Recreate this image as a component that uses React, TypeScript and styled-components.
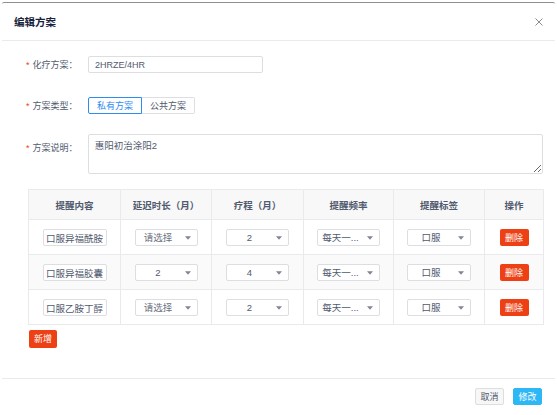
import styled, { createGlobalStyle } from 'styled-components';

const GlobalStyle = createGlobalStyle`
    html, body {
        margin: 0;
        padding: 0;
        background: #ffffff;
    }
    body {
        font-family: 'Liberation Sans', 'Noto Sans CJK SC', sans-serif;
        color: #515a6e;
    }
    * {
        box-sizing: border-box;
    }
`;

const Page = styled.div`
    width: 557px;
    height: 415px;
    padding: 2px 2px 0 2px;
    overflow: hidden;
`;

const Modal = styled.div`
    height: 411px;
    border-top: 1px solid #8f8f8f;
    border-radius: 2px 2px 0 0;
    background: #ffffff;
    display: flex;
    flex-direction: column;
`;

const Header = styled.div`
    height: 38px;
    padding: 0 12px 0 12px;
    border-bottom: 1px solid #e8eaec;
    display: flex;
    align-items: center;
    justify-content: space-between;
`;

const Title = styled.div`
    font-family: 'Noto Sans CJK SC', sans-serif;
    font-size: 10.5px;
    font-weight: 700;
    color: #17233d;
`;

const Close = styled.svg`
    width: 8px;
    height: 8px;
`;

const Body = styled.div`
    padding: 15px 12px 0 24px;
    flex: 1;
`;

const FormItem = styled.div<{ $mb: number; $top?: boolean }>`
    display: flex;
    align-items: ${(p) => (p.$top ? 'flex-start' : 'center')};
    margin-bottom: ${(p) => p.$mb}px;
`;

const Label = styled.div<{ $pt?: number }>`
    width: 62px;
    display: flex;
    align-items: center;
    font-family: 'Noto Sans CJK SC', sans-serif;
    font-size: 9px;
    line-height: 12px;
    color: #515a6e;
    padding-top: ${(p) => p.$pt ?? 0}px;
`;

const Star = styled.span`
    color: #ed4014;
    font-family: 'Liberation Sans', sans-serif;
    font-size: 9px;
    margin-right: 3px;
`;

const TextInput = styled.input`
    width: 175px;
    height: 17px;
    padding: 0 6px;
    border: 1px solid #dcdee2;
    border-radius: 2px;
    font-family: 'Liberation Sans', 'Noto Sans CJK SC', sans-serif;
    font-size: 9px;
    color: #515a6e;
    outline: none;
`;

const RadioGroup = styled.div`
    display: flex;
`;

const RadioButton = styled.div<{ $active?: boolean; $w: number; $first?: boolean }>`
    width: ${(p) => p.$w}px;
    height: 17px;
    display: flex;
    align-items: center;
    justify-content: center;
    font-family: 'Noto Sans CJK SC', sans-serif;
    font-size: 9px;
    color: ${(p) => (p.$active ? '#2d8cf0' : '#515a6e')};
    border: 1px solid ${(p) => (p.$active ? '#2d8cf0' : '#dcdee2')};
    border-left-width: ${(p) => (p.$first ? 1 : 0)}px;
    border-radius: ${(p) => (p.$first ? '2px 0 0 2px' : '0 2px 2px 0')};
`;

const TextArea = styled.textarea`
    width: 457px;
    height: 40px;
    padding: 4px 6px;
    border: 1px solid #dcdee2;
    border-radius: 2px;
    font-family: 'Liberation Sans', 'Noto Sans CJK SC', sans-serif;
    font-size: 9.5px;
    line-height: 14px;
    color: #515a6e;
    resize: vertical;
    outline: none;
`;

const Table = styled.table`
    width: 515px;
    margin-left: 2px;
    border-collapse: collapse;
    table-layout: fixed;
    border: 1px solid #e8eaec;
`;

const Th = styled.th`
    height: 30px;
    background: #f8f8f9;
    border: 1px solid #e8eaec;
    font-family: 'Noto Sans CJK SC', sans-serif;
    font-size: 9.5px;
    font-weight: 700;
    color: #515a6e;
    padding: 0;
`;

const Tr = styled.tr<{ $striped?: boolean }>`
    background: ${(p) => (p.$striped ? '#fafafa' : '#ffffff')};
`;

const Td = styled.td`
    height: 35px;
    border: 1px solid #e8eaec;
    text-align: center;
    vertical-align: middle;
    padding: 0;
`;

const CellInput = styled.input`
    width: 64px;
    height: 17px;
    padding: 0 1px;
    border: 1px solid #dcdee2;
    border-radius: 2px;
    font-family: 'Noto Sans CJK SC', sans-serif;
    font-size: 9.5px;
    text-align: center;
    color: #515a6e;
    background: #ffffff;
    outline: none;
    vertical-align: middle;
`;

const Select = styled.div<{ $w: number }>`
    display: inline-flex;
    align-items: center;
    width: ${(p) => p.$w}px;
    height: 17px;
    border: 1px solid #dcdee2;
    border-radius: 2px;
    background: #ffffff;
    vertical-align: middle;
`;

const SelectText = styled.span<{ $placeholder?: boolean }>`
    flex: 1;
    text-align: center;
    font-family: 'Liberation Sans', 'Noto Sans CJK SC', sans-serif;
    font-size: 9.5px;
    line-height: 15px;
    color: ${(p) => (p.$placeholder ? '#6b7080' : '#515a6e')};
    white-space: nowrap;
    overflow: hidden;
`;

const Caret = styled.svg`
    width: 6px;
    height: 4px;
    margin: 0 6px 0 4px;
    flex-shrink: 0;
`;

const DangerButton = styled.button<{ $w: number; $h: number }>`
    width: ${(p) => p.$w}px;
    height: ${(p) => p.$h}px;
    padding: 0;
    border: none;
    border-radius: 2px;
    background: #ed4014;
    color: #ffffff;
    font-family: 'Noto Sans CJK SC', sans-serif;
    font-size: 9px;
    vertical-align: middle;
`;

const AddRow = styled.div`
    padding: 4px 0 0 3px;
`;

const Footer = styled.div`
    border-top: 1px solid #e8eaec;
    padding: 9px 13px 8px 0;
    display: flex;
    justify-content: flex-end;
    gap: 9px;
`;

const FooterButton = styled.button<{ $primary?: boolean }>`
    width: 29px;
    height: 17px;
    padding: 0;
    border-radius: 2px;
    border: 1px solid ${(p) => (p.$primary ? '#2db7f5' : '#dcdee2')};
    background: ${(p) => (p.$primary ? '#2db7f5' : '#f7f7f7')};
    color: ${(p) => (p.$primary ? '#ffffff' : '#515a6e')};
    font-family: 'Noto Sans CJK SC', sans-serif;
    font-size: 9px;
`;

type Row = {
    name: string;
    delay: string;
    course: string;
    freq: string;
    tag: string;
};

const rows: Row[] = [
    { name: '口服异福酰胺', delay: '', course: '2', freq: '每天一...', tag: '口服' },
    { name: '口服异福胶囊', delay: '2', course: '4', freq: '每天一...', tag: '口服' },
    { name: '口服乙胺丁醇', delay: '', course: '2', freq: '每天一...', tag: '口服' },
];

const SelectBox = ({ value, width = 63 }: { value: string; width?: number }) => (
    <Select $w={width}>
        <SelectText $placeholder={!value}>{value || '请选择'}</SelectText>
        <Caret viewBox="0 0 6 4">
            <polygon points="0,0.3 6,0.3 3,3.7" fill="#808695" />
        </Caret>
    </Select>
);

const App = () => {
    return (
        <Page>
            <GlobalStyle />
            <Modal>
                <Header>
                    <Title>编辑方案</Title>
                    <Close viewBox="0 0 8 8">
                        <path d="M0.5 0.5 L7.5 7.5 M7.5 0.5 L0.5 7.5" stroke="#8a8a8a" strokeWidth="1" />
                    </Close>
                </Header>
                <Body>
                    <FormItem $mb={24}>
                        <Label>
                            <Star>*</Star>化疗方案：
                        </Label>
                        <TextInput defaultValue="2HRZE/4HR" readOnly />
                    </FormItem>
                    <FormItem $mb={20}>
                        <Label>
                            <Star>*</Star>方案类型：
                        </Label>
                        <RadioGroup>
                            <RadioButton $active $first $w={54}>
                                私有方案
                            </RadioButton>
                            <RadioButton $w={53}>公共方案</RadioButton>
                        </RadioGroup>
                    </FormItem>
                    <FormItem $mb={15} $top>
                        <Label $pt={8}>
                            <Star>*</Star>方案说明：
                        </Label>
                        <TextArea defaultValue="惠阳初治涂阳2" readOnly />
                    </FormItem>
                    <Table>
                        <colgroup>
                            <col style={{ width: 92 }} />
                            <col style={{ width: 91 }} />
                            <col style={{ width: 92 }} />
                            <col style={{ width: 90 }} />
                            <col style={{ width: 91 }} />
                            <col style={{ width: 59 }} />
                        </colgroup>
                        <thead>
                            <tr>
                                <Th>提醒内容</Th>
                                <Th>延迟时长（月）</Th>
                                <Th>疗程（月）</Th>
                                <Th>提醒频率</Th>
                                <Th>提醒标签</Th>
                                <Th>操作</Th>
                            </tr>
                        </thead>
                        <tbody>
                            {rows.map((r, i) => (
                                <Tr key={i} $striped={i === 1}>
                                    <Td>
                                        <CellInput defaultValue={r.name} readOnly />
                                    </Td>
                                    <Td>
                                        <SelectBox value={r.delay} />
                                    </Td>
                                    <Td>
                                        <SelectBox value={r.course} />
                                    </Td>
                                    <Td>
                                        <SelectBox value={r.freq} />
                                    </Td>
                                    <Td>
                                        <SelectBox value={r.tag} width={64} />
                                    </Td>
                                    <Td>
                                        <DangerButton $w={29} $h={17}>删除</DangerButton>
                                    </Td>
                                </Tr>
                            ))}
                        </tbody>
                    </Table>
                    <AddRow>
                        <DangerButton $w={28} $h={18}>新增</DangerButton>
                    </AddRow>
                </Body>
                <Footer>
                    <FooterButton>取消</FooterButton>
                    <FooterButton $primary>修改</FooterButton>
                </Footer>
            </Modal>
        </Page>
    );
};

export default App;
